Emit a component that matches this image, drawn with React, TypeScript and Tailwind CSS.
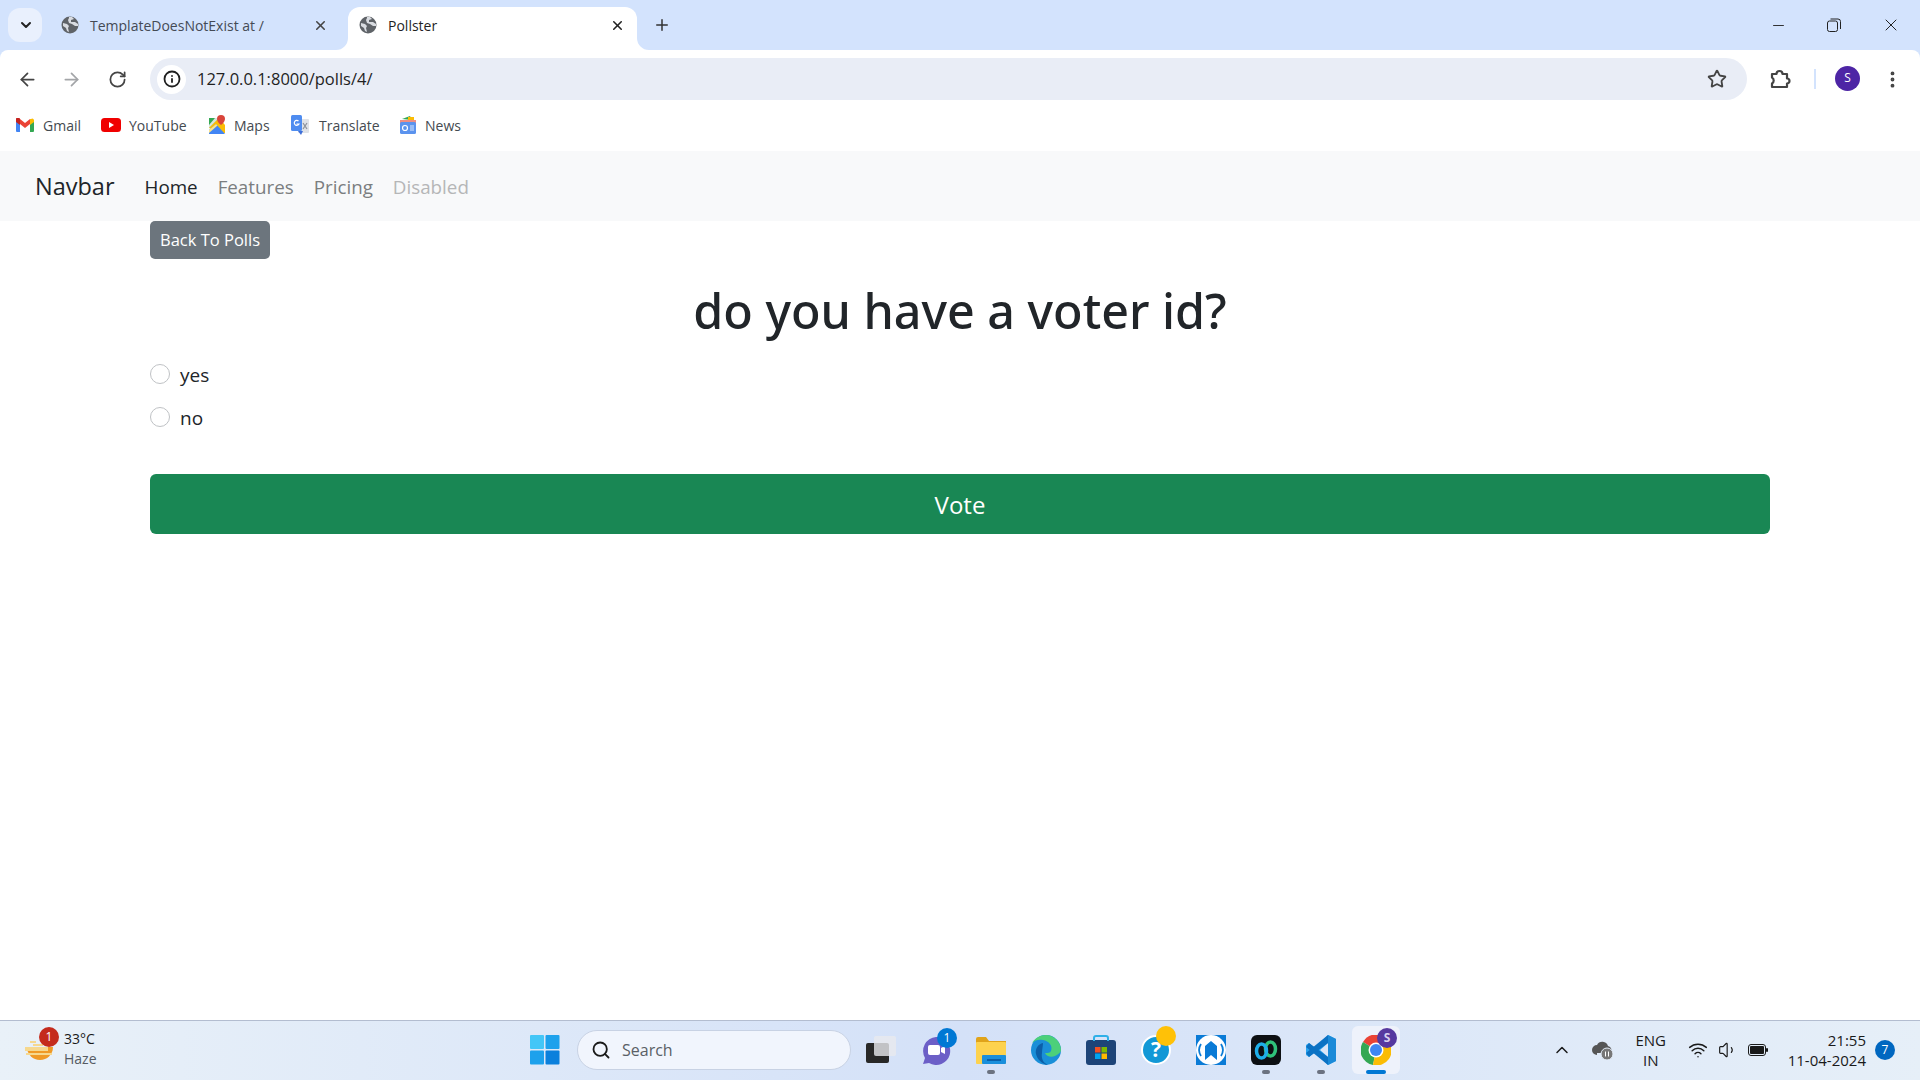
import { ArrowLeft, ArrowRight, RotateCw, Star, EllipsisVertical, ChevronDown, ChevronUp, X, Plus, Minus, Search, Wifi, Volume1, Info } from "lucide-react";
import type { ReactNode } from "react";

const ui = "font-['Open_Sans','Noto_Sans',sans-serif]";

function Globe() {
  return (
    <svg width="18" height="18" viewBox="0 0 18 18" className="shrink-0">
      <circle cx="9" cy="9" r="8.5" fill="#5f6368" />
      <path d="M2 7l4 1 2 2-1 2 1 4-2-1-1-3-3-2zM8 1l3 0 2 2-3 1 0 2 4 0 3 2 0 2-3 0-3-2-3-1-1-3 1-2z" fill="#d9dce1" />
    </svg>
  );
}

function Tab({ title, active }: { title: string; active?: boolean }) {
  if (active) {
    return (
      <div className="relative flex items-center h-[43px] w-[289px] bg-white rounded-t-xl pl-[11px] pr-[12px] pb-[7px] gap-[11px] text-[#1f1f1f]">
        <svg width="12" height="12" viewBox="0 0 12 12" className="absolute left-[-12px] bottom-0">
          <path d="M12 0v12H0a12 12 0 0 0 12-12z" fill="#fff" />
        </svg>
        <svg width="12" height="12" viewBox="0 0 12 12" className="absolute right-[-12px] bottom-0">
          <path d="M0 0v12h12A12 12 0 0 1 0 0z" fill="#fff" />
        </svg>
        <Globe />
        <span className="text-[14px] flex-1">{title}</span>
        <X size={15} strokeWidth={2.5} className="text-[#222]" />
      </div>
    );
  }
  return (
    <div className="flex items-center h-[43px] w-[300px] pl-[13px] pr-[20px] pb-[7px] gap-[11px] text-[#444a55]">
      <Globe />
      <span className="text-[14px] flex-1">{title}</span>
      <X size={15} strokeWidth={2.5} className="text-[#444]" />
    </div>
  );
}

function Bookmark({ icon, label, className }: { icon: ReactNode; label: string; className: string }) {
  return (
    <div className={`flex items-center text-[14px] text-[#444a50] ${className}`}>
      {icon}
      <span>{label}</span>
    </div>
  );
}

function BrowserChrome() {
  return (
    <header className={`shrink-0 bg-[#d3e3fd] ${ui}`}>
      <div className="flex items-end h-[50px] pl-2">
        <div className="self-start mt-2 w-[34px] h-[34px] rounded-xl bg-[#e9f0fd] flex items-center justify-center">
          <ChevronDown size={16} strokeWidth={3} className="text-[#222] ml-[2px]" />
        </div>
        <div className="ml-[6px]"><Tab title="TemplateDoesNotExist at /" /></div>
        <Tab title="Pollster" active />
        <Plus size={18} strokeWidth={2} className="ml-4 mb-[16px] text-[#333]" />
        <div className="ml-auto self-start flex items-center h-[50px] text-[#222]">
          <div className="w-14 flex justify-center"><Minus size={17} strokeWidth={1.3} /></div>
          <div className="w-14 flex justify-center">
            <svg width="14" height="14" viewBox="0 0 14 14" fill="none" stroke="#222" strokeWidth="1">
              <rect x="0.5" y="3" width="10" height="10.5" rx="2" />
              <path d="M3.5 1h7.5a2.5 2.5 0 0 1 2.500 2.500V11" />
            </svg>
          </div>
          <div className="w-[58px] flex justify-center"><X size={20} strokeWidth={1.2} /></div>
        </div>
      </div>
      <div className="bg-white rounded-t-lg">
        <div className="flex items-center h-[58px]">
          <div className="w-[150px] flex items-center pl-[17px] gap-[23px] text-[#444]">
            <ArrowLeft size={21} strokeWidth={2} />
            <ArrowRight size={21} strokeWidth={2} className="text-[#a3a5a8]" />
            <RotateCw size={19} strokeWidth={2.2} className="ml-[3px]" />
          </div>
          <div className="flex items-center w-[1597px] h-[42px] rounded-full bg-[#e9edf6] pl-[7px] pr-[20px]">
            <div className="w-[29px] h-[29px] rounded-full bg-white flex items-center justify-center">
              <Info size={18} strokeWidth={2.4} className="text-[#1f1f1f]" />
            </div>
            <span className="ml-[11px] text-[16.5px] text-[#1f1f1f] flex-1">127.0.0.1:8000/polls/4/</span>
            <Star size={20} strokeWidth={2.2} className="text-[#444]" />
          </div>
          <svg width="22" height="22" viewBox="0 0 22 22" fill="none" stroke="#444" strokeWidth="2.2" strokeLinejoin="round" className="ml-[22px]">
            <path d="M3 6h4.500a3 3 0 0 1 6 0H18v4.500a2.500 2.500 0 0 1 0 5V19H3v-3.500a3.500 3.500 0 0 0 0-6z" />
          </svg>
          <div className="ml-[23px] w-[2px] h-[20px] bg-[#d3e3fd]" />
          <div className="ml-[19px] mb-[2px] w-[25px] h-[25px] rounded-full bg-[#4d25a5] text-white text-[12px] flex items-center justify-center">S</div>
          <EllipsisVertical size={21} strokeWidth={2.4} className="ml-[22px] text-[#444]" />
        </div>
        <div className="flex items-center h-[43px] pl-4 pb-[9px]">
          <Bookmark
            className="w-[85px] gap-[9px]"
            label="Gmail"
            icon={
              <svg width="18" height="14" viewBox="0 0 18 14">
                <path d="M0 2v11a1 1 0 0 0 1 1h3V6z" fill="#4285f4" />
                <path d="M18 2v11a1 1 0 0 1-1 1h-3V6z" fill="#34a853" />
                <path d="M14 1v6l4-3V2a2 2 0 0 0-3-1z" fill="#fbbc04" />
                <path d="M4 1v5l5 4 5-4V1L9 5z" fill="#ea4335" />
                <path d="M0 2v2l4 3V1a2 2 0 0 0-4 1z" fill="#c5221f" />
              </svg>
            }
          />
          <Bookmark
            className="w-[107px] gap-[8px]"
            label="YouTube"
            icon={
              <svg width="20" height="14" viewBox="0 0 20 14">
                <rect width="20" height="14" rx="3.500" fill="#f00000" />
                <path d="M8 4l5 3-5 3z" fill="#fff" />
              </svg>
            }
          />
          <Bookmark
            className="w-[83px] gap-[8px]"
            label="Maps"
            icon={
              <svg width="18" height="20" viewBox="0 0 18 20">
                <path d="M1 3h10L1 13z" fill="#34a853" />
                <path d="M11 3H7L1 10v3z" fill="#d8e4dc" />
                <path d="M1 13L11 3l6 7v8h-3z" fill="#fbbc04" />
                <path d="M1 15l7-6 9 10H1z" fill="#4285f4" />
                <path d="M1 15l7-6 1.500 1.500L1 18z" fill="#fbe38a" />
                <path d="M13 0a4 4 0 0 1 4 4c0 3-4 6-4 6s-4-3-4-6a4 4 0 0 1 4-4z" fill="#d9453a" />
              </svg>
            }
          />
          <Bookmark
            className="w-[108px] gap-[10px]"
            label="Translate"
            icon={
              <svg width="18" height="20" viewBox="0 0 18 20">
                <rect x="7" y="4" width="11" height="14" rx="1" fill="#dfe2e7" />
                <path d="M12 8l4 6M16 8l-4 6" stroke="#8b9099" strokeWidth="1.200" />
                <path d="M7 16l3 4 2-4z" fill="#3f6fd8" />
                <rect width="11" height="16" rx="1.500" fill="#4e8cf0" />
                <path d="M7.500 6a2.500 2.500 0 1 0 0.500 3H5.500" fill="none" stroke="#fff" strokeWidth="1.200" />
              </svg>
            }
          />
          <Bookmark
            className="gap-[8px]"
            label="News"
            icon={
              <svg width="18" height="18" viewBox="0 0 18 18">
                <path d="M3 3l8-3 2 4z" fill="#34a853" />
                <path d="M9 1h6v5H9z" fill="#fbbc04" />
                <path d="M1 4h16v4H1z" fill="#ef8f84" />
                <rect x="1" y="6" width="16" height="12" rx="1.500" fill="#5b93ee" />
                <circle cx="6" cy="12" r="2.500" fill="none" stroke="#fff" strokeWidth="1.200" />
                <path d="M11 10h4M11 12h4M11 14h4" stroke="#dbe8fd" />
              </svg>
            }
          />
        </div>
      </div>
    </header>
  );
}

function Radio({ label }: { label: string }) {
  return (
    <label className="flex items-center h-[43px] text-[19px] text-[#212529]">
      <span className="w-5 h-5 rounded-full border border-[#bfc2c5] bg-white shrink-0" />
      <span className="ml-[10px] relative top-[2px]">{label}</span>
    </label>
  );
}

function PollPage() {
  return (
    <main className={`flex-1 bg-white ${ui}`}>
      <nav className="h-[70px] bg-[#f8f9fa] flex items-center pl-[35px] pt-[2px]">
        <span className="text-[23.5px] text-[#212529] mr-[30px]">Navbar</span>
        <ul className="flex items-center gap-[20px] text-[18.8px]">
          <li className="text-[#212529]">Home</li>
          <li className="text-[#7b7e80]">Features</li>
          <li className="text-[#7b7e80]">Pricing</li>
          <li className="text-[#b5b6b7]">Disabled</li>
        </ul>
      </nav>
      <div className="mx-[150px]">
        <button className="block h-[38px] w-[120px] rounded-[5px] bg-[#6c757d] text-white text-[16.5px]">Back To Polls</button>
        <h1 className="mt-[21px] text-center font-['Noto_Sans',sans-serif] text-[48.4px] leading-[60px] font-medium text-[#212529]">do you have a voter id?</h1>
        <div className="mt-[12px]">
          <Radio label="yes" />
          <Radio label="no" />
        </div>
        <button className="mt-[36px] block w-full h-[60px] pt-[1px] rounded-[6px] bg-[#198754] text-white text-[24px]">Vote</button>
      </div>
    </main>
  );
}

function AppIcon({ children, className = "" }: { children: ReactNode; className?: string }) {
  return <div className={`relative w-[30px] h-[30px] shrink-0 ${className}`}>{children}</div>;
}

function Badge({ className, children }: { className: string; children?: ReactNode }) {
  return (
    <span className={`absolute w-5 h-5 rounded-full flex items-center justify-center text-[12px] ${className}`}>{children}</span>
  );
}

function RunDot() {
  return <span className="absolute left-[11px] bottom-[-9px] w-2 h-[4px] rounded-full bg-[#6b7280]" />;
}

function Taskbar() {
  return (
    <footer className={`shrink-0 h-[60px] pb-px border-t border-[#b3bdd0] bg-gradient-to-r from-[#e9f1f8] via-[#d4e1f8] to-[#e6eff8] flex items-center ${ui}`}>
      <div className="w-[530px] flex items-center pl-[25px]">
        <div className="relative w-[30px] h-[26px]">
          <svg width="30" height="26" viewBox="0 0 30 26">
            <path d="M2 10h26a13 13 0 0 1-26 0z" fill="#f09a26" />
            <path d="M0 10h23v4H0zM1 16h26v2H1zM5 4h6v2H5zM8 7h10v2H8z" fill="#f6d88e" />
          </svg>
          <Badge className="left-[14px] top-[-10px] bg-[#c42b1c] text-white">1</Badge>
        </div>
        <div className="ml-[9px] text-[14px] leading-[20px] relative top-[-1px]">
          <div className="text-[#1a1a1a]">33°C</div>
          <div className="text-[#555b63]">Haze</div>
        </div>
      </div>

      <div className="flex items-center">
        <svg width="30" height="30" viewBox="0 0 30 30" className="shrink-0">
          <rect width="14" height="14" rx="1" fill="#43c6f7" />
          <rect x="15.500" width="14" height="14" rx="1" fill="#1da1ec" />
          <rect y="15.500" width="14" height="14" rx="1" fill="#1da1ec" />
          <rect x="15.500" y="15.500" width="14" height="14" rx="1" fill="#0b80dc" />
        </svg>
        <div className="ml-[17px] w-[274px] h-[40px] rounded-full bg-[#f1f5fd] border border-[#c8d2e4] flex items-center pl-[13px] text-[16px] text-[#5a5f66]">
          <Search size={20} strokeWidth={2.2} className="text-[#1a1a1a]" />
          <span className="ml-[11px]">Search</span>
        </div>
        <svg width="30" height="30" viewBox="0 0 30 30" className="ml-[15px] shrink-0">
          <rect x="0" y="8" width="23" height="20" rx="2" fill="#282828" />
          <rect x="8" y="1" width="22" height="20" rx="2" fill="#e8eaee" fillOpacity="0.8" />
        </svg>
        <AppIcon className="ml-[25px]">
          <svg width="30" height="30" viewBox="0 0 30 30">
            <path d="M15 2a14 14 0 1 1-7 26l-6 1 2-6A14 14 0 0 1 15 2z" fill="#6c5fc7" />
            <rect x="7" y="10" width="12" height="10" rx="2" fill="#fff" />
            <path d="M20 13l4-2v8l-4-2z" fill="#fff" />
          </svg>
          <Badge className="left-[16px] top-[-7px] bg-[#0078d4] text-white">1</Badge>
        </AppIcon>
        <AppIcon className="ml-[25px]">
          <svg width="30" height="30" viewBox="0 0 30 30">
            <path d="M0 4a2 2 0 0 1 2-2h8l3 4h17v8H0z" fill="#e0a31a" />
            <rect y="7" width="30" height="22" rx="1" fill="#fdd24e" />
            <rect x="6" y="20" width="24" height="9" rx="1" fill="#1a8fdc" />
            <rect x="11" y="24" width="14" height="2" fill="#0a5fa8" />
          </svg>
          <RunDot />
        </AppIcon>
        <AppIcon className="ml-[25px]">
          <svg width="30" height="30" viewBox="0 0 30 30">
            <circle cx="15" cy="15" r="15" fill="#1a8fd8" />
            <path d="M30 15C30 7 23 0 15 0 9 0 4 3 1 8c3-3 7-4 11-3 6 1 10 6 8 11-1 2-3 2-6 2 1 3 6 5 10 3 4-2 6-4 6-6z" fill="#4cd07a" />
            <path d="M12 8c-5 1-8 6-7 11s6 10 12 11c-5-2-7-7-6-12 0-4 1-7 1-10z" fill="#0c5fa8" />
          </svg>
        </AppIcon>
        <AppIcon className="ml-[25px]">
          <svg width="30" height="30" viewBox="0 0 30 30">
            <rect y="5" width="30" height="25" rx="3" fill="#1d4478" />
            <path d="M8 6V3a2 2 0 0 1 2-2h10a2 2 0 0 1 2 2v3" fill="none" stroke="#2fb0e8" strokeWidth="2" />
            <rect x="9" y="12" width="5.500" height="5.500" fill="#f25022" />
            <rect x="15.500" y="12" width="5.500" height="5.500" fill="#7fba00" />
            <rect x="9" y="18.500" width="5.500" height="5.500" fill="#00a4ef" />
            <rect x="15.500" y="18.500" width="5.500" height="5.500" fill="#ffb900" />
          </svg>
        </AppIcon>
        <AppIcon className="ml-[25px]">
          <span className="absolute inset-0 rounded-full bg-[#1298d6] border-2 border-white flex items-center justify-center text-white text-[21px] font-bold">?</span>
          <Badge className="left-[15px] top-[-9px] bg-[#ffc107]" />
        </AppIcon>
        <AppIcon className="ml-[25px]">
          <svg width="30" height="30" viewBox="0 0 30 30">
            <rect width="30" height="30" fill="#0a7bd6" />
            <circle cx="15" cy="15" r="15" fill="#fff" />
            <path d="M5 21a11 11 0 0 1 0-12M25 9a11 11 0 0 1 0 12" fill="none" stroke="#0a7bd6" strokeWidth="1.800" />
            <path d="M9 11l6-5 6 5v14l-6-5-6 5z" fill="#0a7bd6" />
          </svg>
        </AppIcon>
        <AppIcon className="ml-[25px]">
          <svg width="30" height="30" viewBox="0 0 30 30">
            <rect width="30" height="30" rx="6" fill="#0d1013" />
            <ellipse cx="19.500" cy="14" rx="5" ry="7" fill="none" stroke="#2fc27a" strokeWidth="3.500" />
            <ellipse cx="10.500" cy="16" rx="5" ry="7" fill="none" stroke="#1eaee8" strokeWidth="3.500" />
          </svg>
          <RunDot />
        </AppIcon>
        <AppIcon className="ml-[25px]">
          <svg width="30" height="30" viewBox="0 0 30 30">
            <path d="M22 0l8 4v22l-8 4L9 17l-6 5-3-2v-10l3-2 6 5z" fill="#2aa3ee" />
            <path d="M22 0l8 4v22l-8 4z" fill="#1a8ad8" />
            <path d="M22 8l-8 7 8 7z" fill="#dbe5f7" />
            <path d="M3 8l19 14v8L0 12z" fill="#0b72c4" />
            <path d="M0 18l22-18v8L3 22z" fill="#0b72c4" />
          </svg>
          <RunDot />
        </AppIcon>
        <div className="relative ml-[16px] w-[48px] h-[48px] rounded-md bg-[#eef2fb] flex items-center justify-center">
          <svg width="30" height="30" viewBox="0 0 30 30">
            <path d="M15 15L28 7A15 15 0 0 0 2 7z" fill="#ea4335" />
            <path d="M15 15l-13-8A15 15 0 0 0 12 30z" fill="#34a853" />
            <path d="M15 15l13-8a15 15 0 0 1-16 23z" fill="#fbbc04" />
            <circle cx="15" cy="15" r="7.500" fill="#fff" />
            <circle cx="15" cy="15" r="6" fill="#3f86f2" />
          </svg>
          <Badge className="left-[25px] top-[2px] bg-[#57399f] text-[#d8d0f0] font-bold">S</Badge>
          <span className="absolute left-[14px] bottom-0 w-5 h-[4px] rounded-full bg-[#0078d4]" />
        </div>
      </div>

      <div className="ml-auto flex items-center pr-[25px] text-[#1a1a1a] text-[15px]">
        <ChevronUp size={20} strokeWidth={1.8} />
        <svg width="22" height="20" viewBox="0 0 22 20" className="ml-[20px]">
          <path d="M5 15a5 5 0 0 1 0-10 6 6 0 0 1 11 1 4 4 0 0 1 2 7H5z" fill="#555" />
          <circle cx="15" cy="14" r="6" fill="#777" stroke="#e4edf8" />
          <path d="M13.500 11.500v5M16.500 11.500v5" stroke="#fff" />
        </svg>
        <div className="ml-[16px] w-[42px] text-center leading-[20px]">
          <div>ENG</div>
          <div>IN</div>
        </div>
        <Wifi size={20} strokeWidth={1.8} className="ml-[16px]" />
        <Volume1 size={20} strokeWidth={1.4} className="ml-[10px]" />
        <svg width="20" height="12" viewBox="0 0 20 12" className="ml-[10px]">
          <rect x="0.500" y="0.500" width="17" height="11" rx="2.500" fill="none" stroke="#1a1a1a" />
          <rect x="2" y="2" width="14" height="8" rx="1" fill="#1a1a1a" />
          <rect x="18" y="4" width="2" height="4" rx="1" fill="#1a1a1a" />
        </svg>
        <div className="ml-[20px] text-right leading-[20px]">
          <div>21:55</div>
          <div>11-04-2024</div>
        </div>
        <span className="ml-[9px] w-5 h-5 rounded-full bg-[#0067c0] text-white text-[12px] flex items-center justify-center">7</span>
      </div>
    </footer>
  );
}

export default function App() {
  return (
    <div className="h-screen w-full flex flex-col overflow-hidden bg-white">
      <BrowserChrome />
      <PollPage />
      <Taskbar />
    </div>
  );
}
